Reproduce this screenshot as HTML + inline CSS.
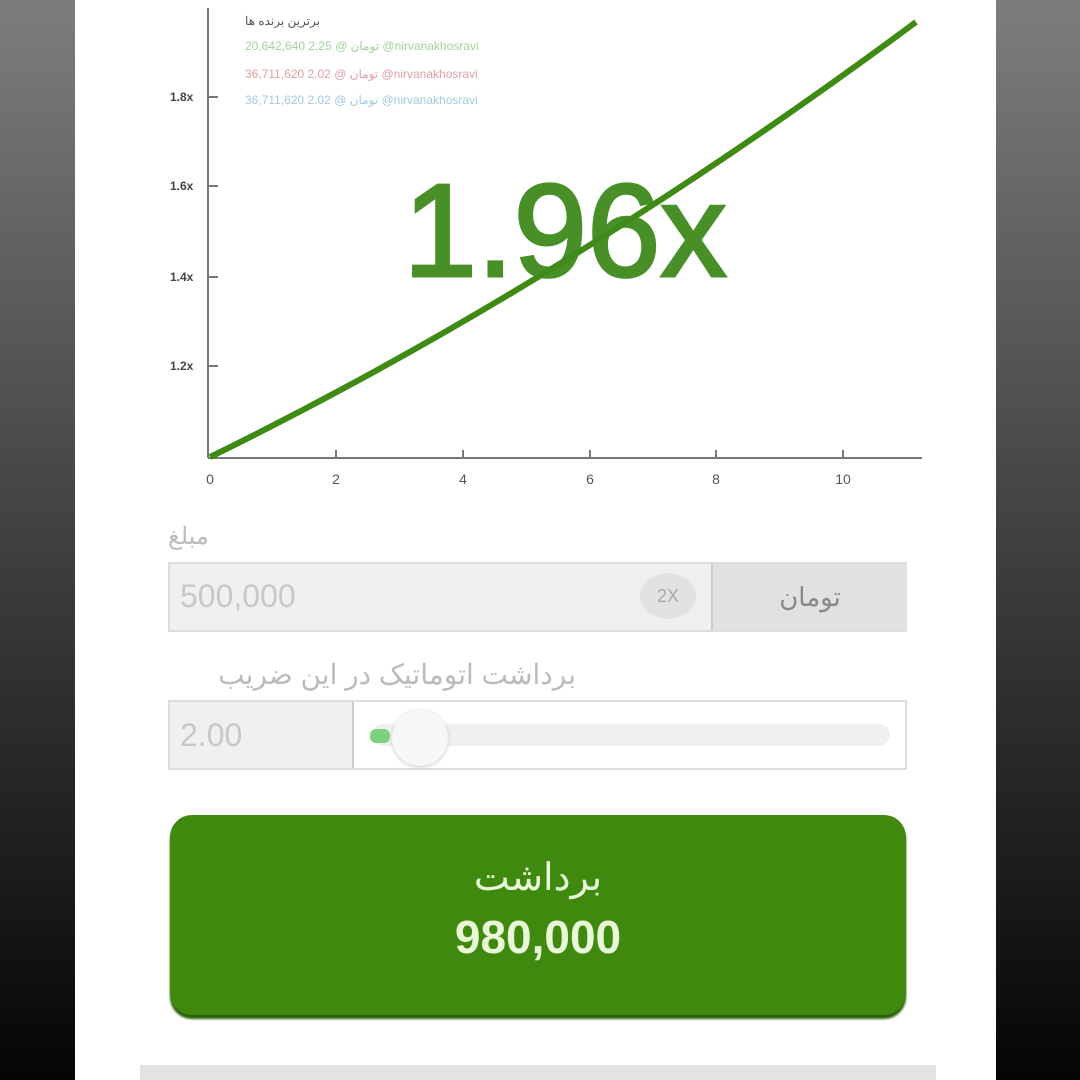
<!DOCTYPE html>
<html><head><meta charset="utf-8"><style>
body{margin:0;width:1080px;height:1080px;overflow:hidden;background:#fff;position:relative;font-family:"Liberation Sans","Noto Sans CJK SC",sans-serif}
.side{position:absolute;top:0;height:1080px;background:linear-gradient(#7d7d7d,#3a3a3a 55%,#050505)}
.a{position:absolute}
</style></head><body>
<div class="side" style="left:0;width:75px"></div>
<div class="side" style="left:996px;width:84px"></div>
<svg class="a" style="left:0;top:0" width="1080" height="500">
<g stroke="#777" stroke-width="2" fill="none">
<line x1="208" y1="8" x2="208" y2="458"/><line x1="208" y1="458" x2="922" y2="458"/>
<line x1="208" y1="97" x2="218" y2="97"/><line x1="208" y1="186" x2="218" y2="186"/><line x1="208" y1="277" x2="218" y2="277"/><line x1="208" y1="366" x2="218" y2="366"/>
<line x1="336" y1="450" x2="336" y2="458"/><line x1="463" y1="450" x2="463" y2="458"/><line x1="590" y1="450" x2="590" y2="458"/><line x1="716" y1="450" x2="716" y2="458"/><line x1="843" y1="450" x2="843" y2="458"/>
</g>
<g font-size="12" fill="#444" font-weight="bold">
<text x="170" y="101">1.8x</text><text x="170" y="190">1.6x</text><text x="170" y="281">1.4x</text><text x="170" y="370">1.2x</text>
</g>
<g font-size="14" fill="#555" text-anchor="middle">
<text x="210" y="484">0</text><text x="336" y="484">2</text><text x="463" y="484">4</text><text x="590" y="484">6</text><text x="716" y="484">8</text><text x="843" y="484">10</text>
</g>
<g font-size="12">
<text x="245" y="25" fill="#555">برترین برنده ها</text>
<text x="245" y="50" fill="#9fd39a">20,642,640 2.25 @ تومان @nirvanakhosravi</text>
<text x="245" y="78" fill="#e0a0a0">36,711,620 2.02 @ تومان @nirvanakhosravi</text>
<text x="245" y="104" fill="#9fcbe0">36,711,620 2.02 @ تومان @nirvanakhosravi</text>
</g>
<path d="M210 457 Q563 284 916 22" stroke="#3f8a12" stroke-width="6" fill="none"/>
<text x="565" y="276" text-anchor="middle" font-size="132" fill="#3f8a1c" stroke="#3f8a1c" stroke-width="3" opacity="0.95">1.96x</text>
</svg>
<div class="a" style="left:168px;top:522px;font-size:24px;color:#bbb">مبلغ</div>
<div class="a" style="left:168px;top:562px;width:735px;height:66px;border:2px solid #ddd;background:#f0f0f0"></div>
<div class="a" style="left:180px;top:578px;font-size:32px;color:#c8c8c8">500,000</div>
<div class="a" style="left:640px;top:573px;width:56px;height:46px;border-radius:50%;background:#e2e2e2;color:#aaa;font-size:18px;line-height:46px;text-align:center">2X</div>
<div class="a" style="left:711px;top:564px;width:194px;height:66px;background:#e1e1e1;border-left:2px solid #ccc;font-size:26px;color:#888;line-height:66px;text-align:center">تومان</div>
<div class="a" style="left:160px;top:658px;width:416px;text-align:right;font-size:28px;color:#bbb;direction:rtl">برداشت اتوماتیک در این ضریب</div>
<div class="a" style="left:168px;top:700px;width:735px;height:66px;border:2px solid #ddd;background:#fff"></div>
<div class="a" style="left:170px;top:702px;width:182px;height:66px;background:#f0f0f0;border-right:2px solid #ccc"></div>
<div class="a" style="left:180px;top:717px;font-size:32px;color:#c8c8c8">2.00</div>
<div class="a" style="left:372px;top:724px;width:518px;height:22px;border-radius:11px;background:#f0f0f0"></div>
<div class="a" style="left:370px;top:729px;width:20px;height:14px;border-radius:6px;background:#7dd07d"></div>
<div class="a" style="left:392px;top:710px;width:56px;height:56px;border-radius:50%;background:#f7f7f7;box-shadow:0 1px 4px #ccc"></div>
<div class="a" style="left:170px;top:815px;width:736px;height:200px;border-radius:22px;background:#3f8a0e;box-shadow:0 4px 2px #2a6008;text-align:center;color:#e8f7d8">
<div style="font-size:38px;margin-top:40px">برداشت</div>
<div style="font-size:46px;margin-top:10px;font-weight:bold">980,000</div>
</div>
<div class="a" style="left:140px;top:1065px;width:796px;height:15px;background:#e3e3e3"></div>
</body></html>
